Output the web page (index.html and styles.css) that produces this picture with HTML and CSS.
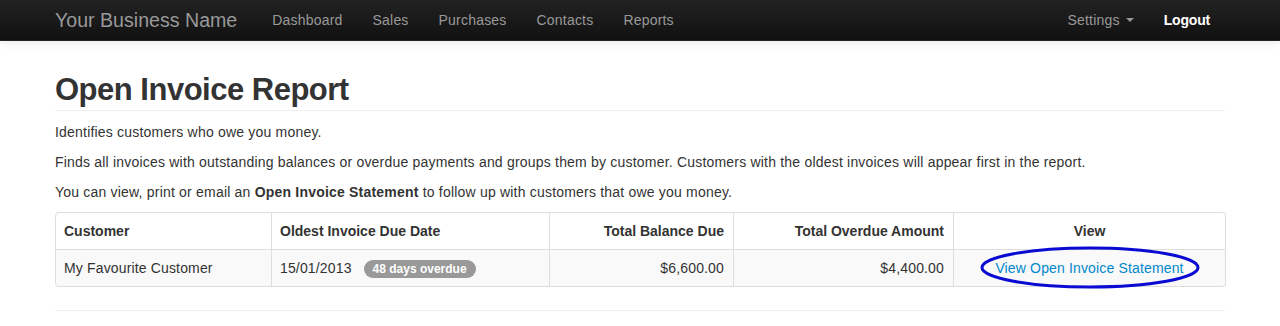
FILE: index.html
```
<!DOCTYPE html>
<html>
<head>
<meta charset="utf-8">
<title>Open Invoice Report</title>
<link rel="stylesheet" href="styles.css">
</head>
<body>
<div class="navbar">
  <div class="container nav-inner">
    <a class="brand" href="#">Your Business Name</a>
    <ul class="nav">
      <li><a href="#">Dashboard</a></li>
      <li><a href="#">Sales</a></li>
      <li><a href="#">Purchases</a></li>
      <li><a href="#">Contacts</a></li>
      <li><a href="#">Reports</a></li>
    </ul>
    <ul class="nav nav-right">
      <li><a href="#">Settings <span class="caret"></span></a></li>
      <li><a class="logout" href="#">Logout</a></li>
    </ul>
  </div>
</div>
<div class="container main">
  <div class="page-header"><h1>Open Invoice Report</h1></div>
  <p>Identifies customers who owe you money.</p>
  <p>Finds all invoices with outstanding balances or overdue payments and groups them by customer. Customers with the oldest invoices will appear first in the report.</p>
  <p>You can view, print or email an <strong>Open Invoice Statement</strong> to follow up with customers that owe you money.</p>
  <table class="table">
    <thead>
      <tr>
        <th class="c1">Customer</th>
        <th class="c2">Oldest Invoice Due Date</th>
        <th class="c3 num">Total Balance Due</th>
        <th class="c4 num">Total Overdue Amount</th>
        <th class="c5 center">View</th>
      </tr>
    </thead>
    <tbody>
      <tr>
        <td>My Favourite Customer</td>
        <td>15/01/2013<span class="badge">48 days overdue</span></td>
        <td class="num">$6,600.00</td>
        <td class="num">$4,400.00</td>
        <td class="center view-cell"><a href="#">View Open Invoice Statement</a><svg class="circle" width="222" height="44" viewBox="0 0 222 44"><ellipse cx="111" cy="21.5" rx="108" ry="19.5" fill="none" stroke="#0a0ad2" stroke-width="3"/></svg></td>
      </tr>
    </tbody>
  </table>
  <hr class="rule">
</div>
</body>
</html>
```
FILE: styles.css
```
html, body {
  margin: 0;
  padding: 0;
}
body {
  font-family: "Liberation Sans", Arial, Helvetica, sans-serif;
  font-size: 14px;
  line-height: 20px;
  color: #333;
  background: #fff;
}
a {
  color: #0088cc;
  text-decoration: none;
}
.container {
  width: 1170px;
  margin: 0 auto;
}
.navbar {
  height: 40px;
  background: linear-gradient(to bottom, #222 0%, #111 100%);
  border-bottom: 1px solid #252525;
  box-shadow: 0 1px 10px rgba(0,0,0,0.1);
}
.nav-inner {
  display: flex;
  align-items: stretch;
  height: 40px;
}
.brand {
  font-size: 19.6px;
  line-height: 20px;
  color: #999;
  padding: 10px 20px 10px 0;
}
.nav {
  list-style: none;
  margin: 0;
  padding: 0;
  display: flex;
}
.nav a {
  display: block;
  padding: 10px 15px;
  color: #999;
  font-size: 14px;
  line-height: 20px;
  letter-spacing: 0.2px;
}
.nav-right {
  margin-left: auto;
}
.nav .logout {
  color: #fff;
  font-weight: bold;
  letter-spacing: -0.2px;
}
.caret {
  display: inline-block;
  width: 0;
  height: 0;
  vertical-align: 3px;
  margin-left: 2px;
  border-top: 4px solid #999;
  border-left: 4px solid transparent;
  border-right: 4px solid transparent;
}
.main {
  padding-top: 29px;
}
.page-header {
  border-bottom: 1px solid #eee;
  margin-bottom: 11px;
}
h1 {
  margin: 0;
  font-size: 31px;
  line-height: 40px;
  font-weight: bold;
  letter-spacing: -0.5px;
}
p {
  margin: 0 0 10px;
  letter-spacing: 0.2px;
}
.table {
  width: 1170px;
  table-layout: fixed;
  border-collapse: separate;
  border-spacing: 0;
  border: 1px solid #ddd;
  border-left: 0;
  border-radius: 4px;
  margin-top: 0;
}
.table th, .table td {
  padding: 8px;
  line-height: 20px;
  text-align: left;
  border-left: 1px solid #ddd;
  vertical-align: top;
}
.table th {
  font-weight: bold;
}
.table td {
  border-top: 1px solid #ddd;
  background: #f9f9f9;
  letter-spacing: 0.15px;
}
.table thead th:first-child { border-top-left-radius: 4px; }
.table tbody tr td:first-child { border-bottom-left-radius: 4px; }
.table tbody tr td:last-child { border-bottom-right-radius: 4px; }
.c1 { width: 199px; }
.c2 { width: 261px; }
.c3 { width: 166px; }
.c4 { width: 202px; }
.c5 { width: 255px; }
.table .num { text-align: right; padding-right: 9px; }
.table .center { text-align: center; }
.badge {
  display: inline-block;
  margin-left: 12px;
  padding: 2px 9px;
  font-size: 12px;
  font-weight: bold;
  line-height: 14px;
  color: #fff;
  background: #999;
  border-radius: 9px;
  vertical-align: baseline;
  letter-spacing: 0;
}
.view-cell {
  position: relative;
}
.circle {
  position: absolute;
  left: 25px;
  top: -4px;
}
.rule {
  margin: 23px 0 0;
  border: 0;
  border-top: 1px solid #eee;
}
```
